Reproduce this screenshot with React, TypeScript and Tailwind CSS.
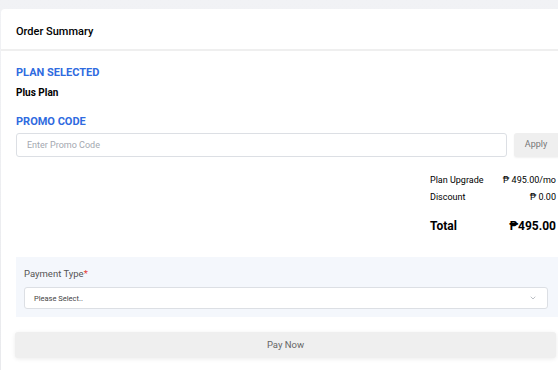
import { ChevronDown } from "lucide-react";

export default function App() {
  return (
    <div className="h-[370px] w-[558px] overflow-hidden bg-gradient-to-b from-[#f1f2f5] to-[#e9eaed] pt-[9px] font-['Roboto',sans-serif]">
      <div className="h-full w-[600px] ml-px rounded-tl-[4px] bg-white">
        {/* Header */}
        <div className="flex h-[42px] items-center border-b-2 border-[#efefef] px-[15px] pt-[6px]">
          <span className="text-[11px] font-medium text-black">Order Summary</span>
        </div>

        <div className="w-[580px] pl-[15px]">
          <div className="mt-[14px] text-[11px] font-bold text-[#2f6be0]">PLAN SELECTED</div>
          <div className="mt-[3px] text-[10px] font-bold text-black">Plus Plan</div>

          <div className="mt-[14px] text-[11px] font-bold text-[#2f6be0]">PROMO CODE</div>
          <div className="mt-[3px] flex h-[24px] gap-[7px]">
            <input
              className="h-full w-[491px] shrink-0 rounded-[3px] border border-[#dcdfe4] bg-white px-[10px] text-[9px] text-gray-700 outline-none placeholder:text-[#a3a8b0]"
              placeholder="Enter Promo Code"
            />
            <button className="h-full w-[46px] shrink-0 rounded-[3px] bg-[#efefef] pr-[2px] text-[9px] text-[#777] shadow-[0_1px_2px_rgba(0,0,0,0.06)]">
              Apply
            </button>
          </div>

          <div className="ml-[414px] mt-[15px] w-[126px] text-[9px] text-black">
            <div className="flex justify-between leading-[17px]">
              <span>Plan Upgrade</span>
              <span>₱ 495.00/mo</span>
            </div>
            <div className="flex justify-between leading-[17px]">
              <span>Discount</span>
              <span>₱ 0.00</span>
            </div>
            <div className="mt-[13px] flex justify-between text-[12px] font-bold leading-[14px]">
              <span>Total</span>
              <span>₱495.00</span>
            </div>
          </div>

          <div className="mt-[24px] h-[60px] w-[542px] bg-[#f4f7fc] px-[8px] pt-[10px]">
            <div className="text-[9.5px] text-[#555]">
              Payment Type<span className="text-[#e53935]">*</span>
            </div>
            <div className="mt-[6px] flex h-[22px] w-[524px] items-center justify-between rounded-[3px] border border-[#dcdfe4] bg-white pl-[9px] pr-[10px]">
              <span className="text-[7.5px] text-[#444]">Please Select..</span>
              <ChevronDown className="h-[8px] w-[8px] text-[#9aa0a8]" strokeWidth={2} />
            </div>
          </div>

          <button className="mt-[15px] ml-[-1px] h-[26px] w-[541px] rounded-[3px] bg-[#efefef] text-[9.5px] text-[#666] shadow-[0_1px_4px_rgba(0,0,0,0.08)]">
            Pay Now
          </button>
        </div>
      </div>
    </div>
  );
}
